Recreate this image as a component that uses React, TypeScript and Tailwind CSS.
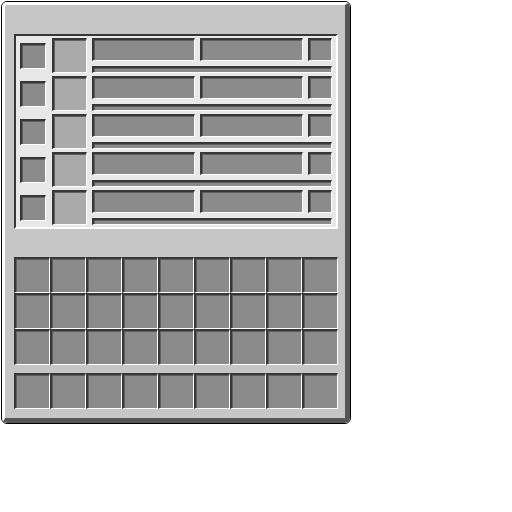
const ROWS = [0, 1, 2, 3, 4];
const INV = Array.from({ length: 27 }, (_, i) => i);
const HOTBAR = Array.from({ length: 9 }, (_, i) => i);

function Well({ className }: { className?: string }) {
    return (
        <div className={`border-t-2 border-l-2 border-b border-r border-t-[#373737] border-l-[#373737] border-b-white border-r-white shadow-[inset_1px_1px_0_#5e5e5e] ${className}`} />
    );
}

function TradeRow() {
    return (
        <div className="flex items-center h-[35px]">
            <Well className="w-[26px] h-[26px] bg-[#8b8b8b]" />
            <Well className="ml-[6px] w-[35px] h-[35px] bg-[#aaaaaa]" />
            <div className="ml-[5px] flex flex-col w-[240px] h-[35px]">
                <div className="flex gap-[5px] h-[23px]">
                    <Well className="w-[103px] h-full bg-[#8b8b8b]" />
                    <Well className="w-[103px] h-full bg-[#8b8b8b]" />
                    <Well className="w-[24px] h-full bg-[#8b8b8b]" />
                </div>
                <Well className="mt-[5px] h-[7px] w-full bg-[#8b8b8b]" />
            </div>
        </div>
    );
}

function Slot() {
    return (
        <div className="w-[36px] h-[36px] border-t-2 border-l-2 border-b border-r border-t-[#373737] border-l-[#373737] border-b-white border-r-white bg-[#8b8b8b] shadow-[inset_1px_1px_0_#5e5e5e]" />
    );
}

export default function App() {
    return (
        <div className="pt-[1px] pl-[1px]">
            <div className="w-[350px] h-[423px] border border-black rounded-[6px] overflow-hidden">
                <div className="h-full border-t-[3px] border-l-[3px] border-r-[5px] border-b-[5px] border-t-white border-l-white border-r-[#555555] border-b-[#555555] rounded-[5px] bg-[#c6c6c6] pl-[9px] pt-[29px]">
                    {/* Trade list */}
                    <div className="w-[324px] h-[195px] border-2 border-t-[#373737] border-l-[#373737] border-b-white border-r-white bg-[#e8e8e8] pl-[4px] pt-[2px] flex flex-col gap-[3px]">
                        {ROWS.map((r) => (
                            <TradeRow key={r} />
                        ))}
                    </div>

                    {/* Inventory */}
                    <div className="mt-[28px] grid grid-cols-9 w-[324px]">
                        {INV.map((i) => (
                            <Slot key={i} />
                        ))}
                    </div>

                    {/* Hotbar */}
                    <div className="mt-[8px] grid grid-cols-9 w-[324px]">
                        {HOTBAR.map((i) => (
                            <Slot key={i} />
                        ))}
                    </div>
                </div>
            </div>
        </div>
    );
}
